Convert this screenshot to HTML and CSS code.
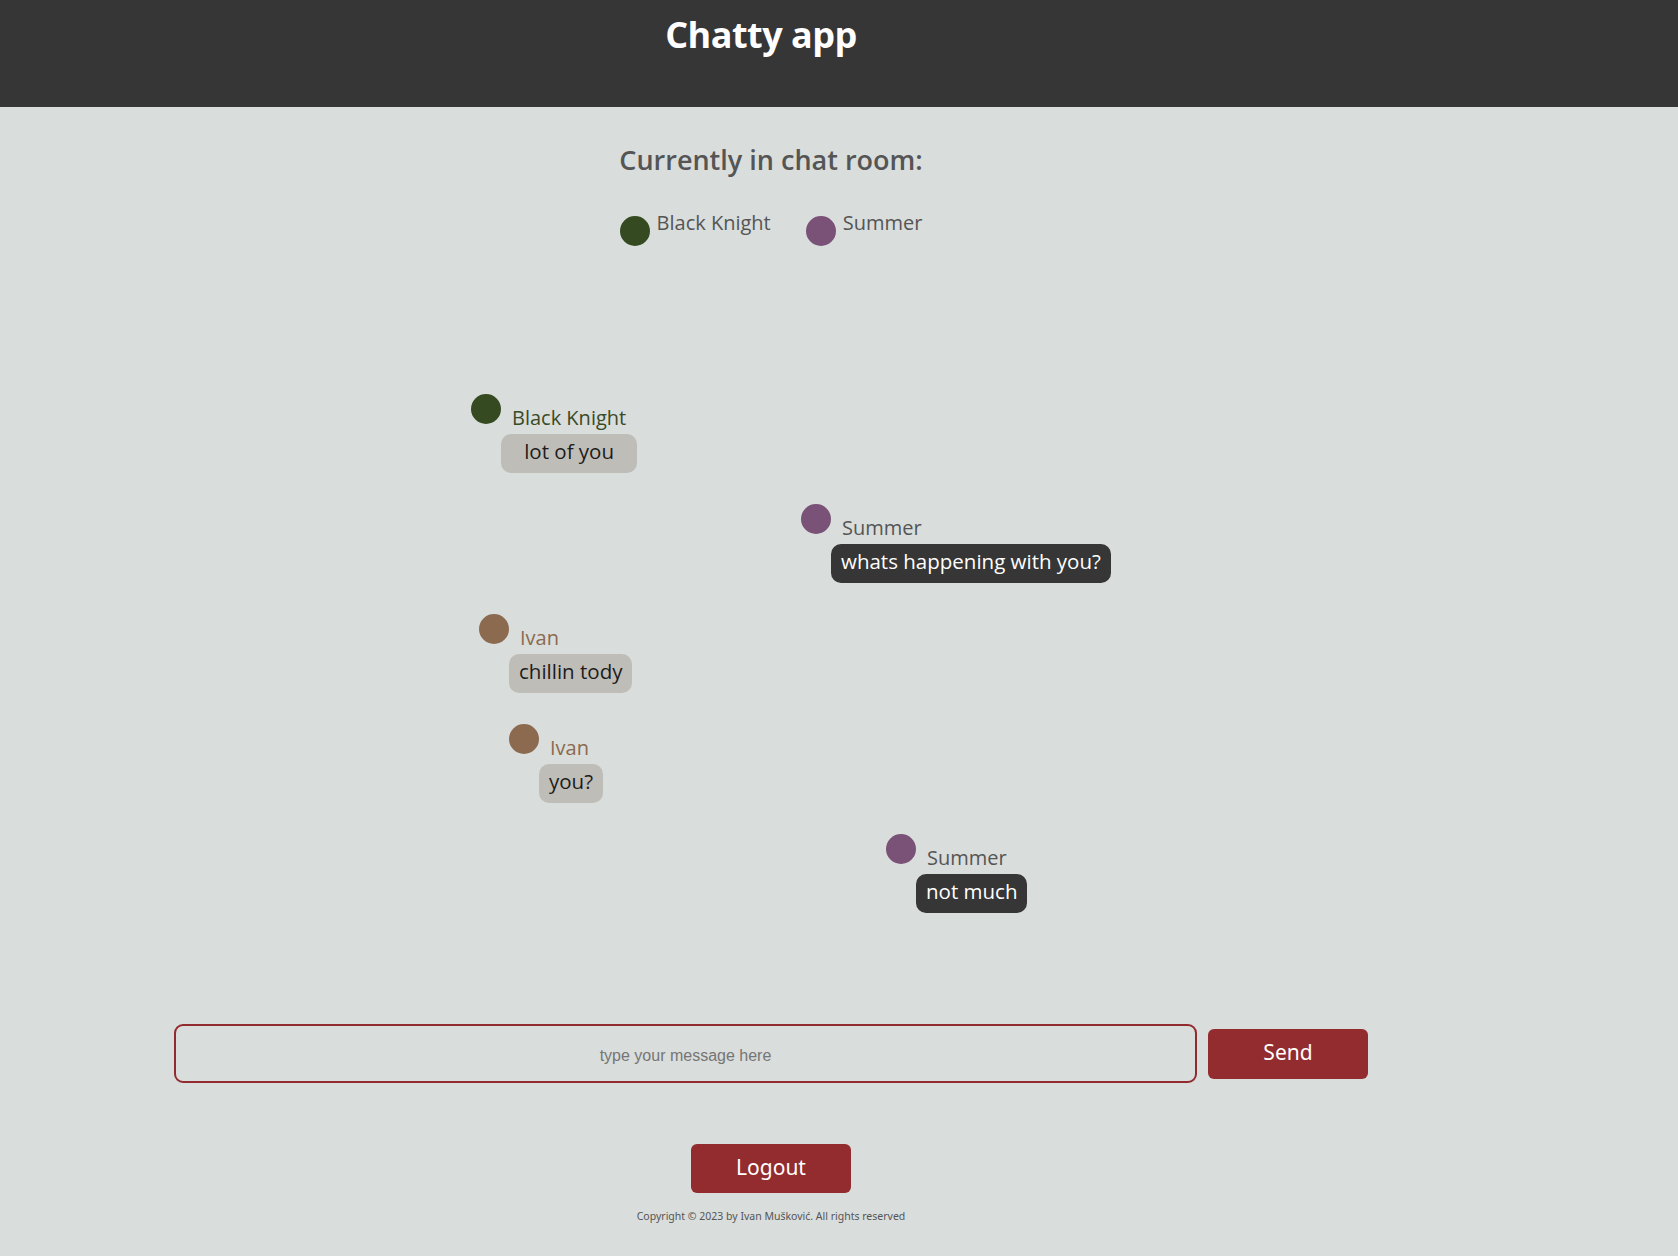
FILE: index.html
```html
<!DOCTYPE html>
<html lang="en">
<head>
<meta charset="utf-8">
<title>Chatty app</title>
<link rel="stylesheet" href="styles.css">
</head>
<body>
<header class="topbar">
  <h1 class="brand">Chatty app</h1>
</header>
<main class="room">
  <h2 class="room-title">Currently in chat room:</h2>
  <ul class="members">
    <li class="member"><span class="dot dot-knight"></span><span class="member-name">Black Knight</span></li>
    <li class="member"><span class="dot dot-summer"></span><span class="member-name">Summer</span></li>
  </ul>

  <section class="messages">
    <div class="msg" style="margin-left: 297px">
      <div class="msg-head"><span class="dot dot-knight"></span><span class="msg-name name-knight">Black Knight</span></div>
      <div class="bubble bubble-light">lot of you</div>
    </div>
    <div class="msg" style="margin-left: 627px">
      <div class="msg-head"><span class="dot dot-summer"></span><span class="msg-name name-summer">Summer</span></div>
      <div class="bubble bubble-dark">whats happening with you?</div>
    </div>
    <div class="msg" style="margin-left: 305px">
      <div class="msg-head"><span class="dot dot-ivan"></span><span class="msg-name name-ivan">Ivan</span></div>
      <div class="bubble bubble-light">chillin tody</div>
    </div>
    <div class="msg" style="margin-left: 335px">
      <div class="msg-head"><span class="dot dot-ivan"></span><span class="msg-name name-ivan">Ivan</span></div>
      <div class="bubble bubble-light">you?</div>
    </div>
    <div class="msg" style="margin-left: 712px">
      <div class="msg-head"><span class="dot dot-summer"></span><span class="msg-name name-summer">Summer</span></div>
      <div class="bubble bubble-dark">not much</div>
    </div>
  </section>

  <form class="composer">
    <input class="composer-input" type="text" placeholder="type your message here">
    <button class="btn btn-send" type="button">Send</button>
  </form>

  <div class="footer">
    <button class="btn btn-logout" type="button">Logout</button>
    <p class="copyright">Copyright © 2023 by Ivan Mušković. All rights reserved</p>
  </div>
</main>
</body>
</html>
```

FILE: styles.css
```css
* { box-sizing: border-box; }

html, body {
  margin: 0;
  padding: 0;
}

body {
  background: #d9dddc;
  font-family: "Open Sans", "Noto Sans", sans-serif;
  color: #555555;
  min-height: 1256px;
}

.topbar {
  background: #363636;
  height: 107px;
  display: flex;
  justify-content: center;
  padding-right: 156px;
}

.brand {
  margin: 0;
  padding-top: 10px;
  color: #ffffff;
  font-size: 36px;
  font-weight: 700;
  line-height: 49px;
  letter-spacing: -0.5px;
}

.room {
  width: 1194px;
  margin-left: 174px;
  display: flex;
  flex-direction: column;
}

.room-title {
  margin: 0;
  padding-top: 34px;
  text-align: center;
  font-size: 27px;
  font-weight: 600;
  line-height: 38px;
  color: #555555;
}

.members {
  list-style: none;
  margin: 0;
  padding: 0;
  padding-top: 30px;
  display: flex;
  justify-content: center;
  gap: 35px;
}

.member {
  display: flex;
  align-items: flex-start;
  gap: 7px;
}

.member-name {
  font-size: 20px;
  line-height: 27px;
  color: #555555;
}

.dot {
  width: 30px;
  height: 30px;
  border-radius: 50%;
  flex: none;
  margin-top: 7px;
}

.dot-knight { background: #354a21; }
.dot-summer { background: #7a5177; }
.dot-ivan { background: #8b6a4f; }

.messages {
  padding-top: 148px;
  display: flex;
  flex-direction: column;
  align-items: flex-start;
  gap: 31px;
}

.msg {
  display: flex;
  flex-direction: column;
  align-items: stretch;
}

.msg-head {
  display: flex;
  align-items: flex-start;
}

.msg-head .dot {
  margin-top: 0;
}

.msg-name {
  margin-top: 10px;
  padding: 0 11px;
  font-size: 20px;
  line-height: 27px;
}

.name-knight { color: #3a4b27; }
.name-summer { color: #555555; }
.name-ivan { color: #8b6a4f; }

.bubble {
  margin-left: 30px;
  margin-top: 3px;
  padding: 0 10px 4px;
  border-radius: 10px;
  font-size: 20.5px;
  line-height: 35px;
  text-align: center;
  white-space: nowrap;
}

.bubble-light {
  background: #bfbdb8;
  color: #1c1c1c;
}

.bubble-dark {
  background: #363636;
  color: #ffffff;
}

.composer {
  margin: 0;
  display: flex;
  align-items: center;
  gap: 11px;
  margin-top: 111px;
}

.composer-input {
  width: 1023px;
  height: 59px;
  padding: 4px 0 0;
  border: 2px solid #922b2f;
  border-radius: 9px;
  background: transparent;
  text-align: center;
  font-family: "Liberation Sans", Arial, sans-serif;
  font-size: 16px;
  color: #333333;
  outline: none;
}

.composer-input::placeholder {
  color: #757575;
}

.btn {
  border: none;
  background: #932c2f;
  color: #ffffff;
  font-family: "Noto Sans", "Open Sans", sans-serif;
  font-size: 21px;
  width: 160px;
  height: 50px;
  border-radius: 6px;
  cursor: pointer;
  padding: 0 0 3px;
}

.footer {
  display: flex;
  flex-direction: column;
  align-items: center;
  padding-top: 61px;
}

.btn-logout {
  height: 49px;
}

.copyright {
  margin: 0;
  padding-top: 16px;
  font-family: "Noto Sans", sans-serif;
  font-size: 10.5px;
  line-height: 15px;
  color: #555555;
}
```
